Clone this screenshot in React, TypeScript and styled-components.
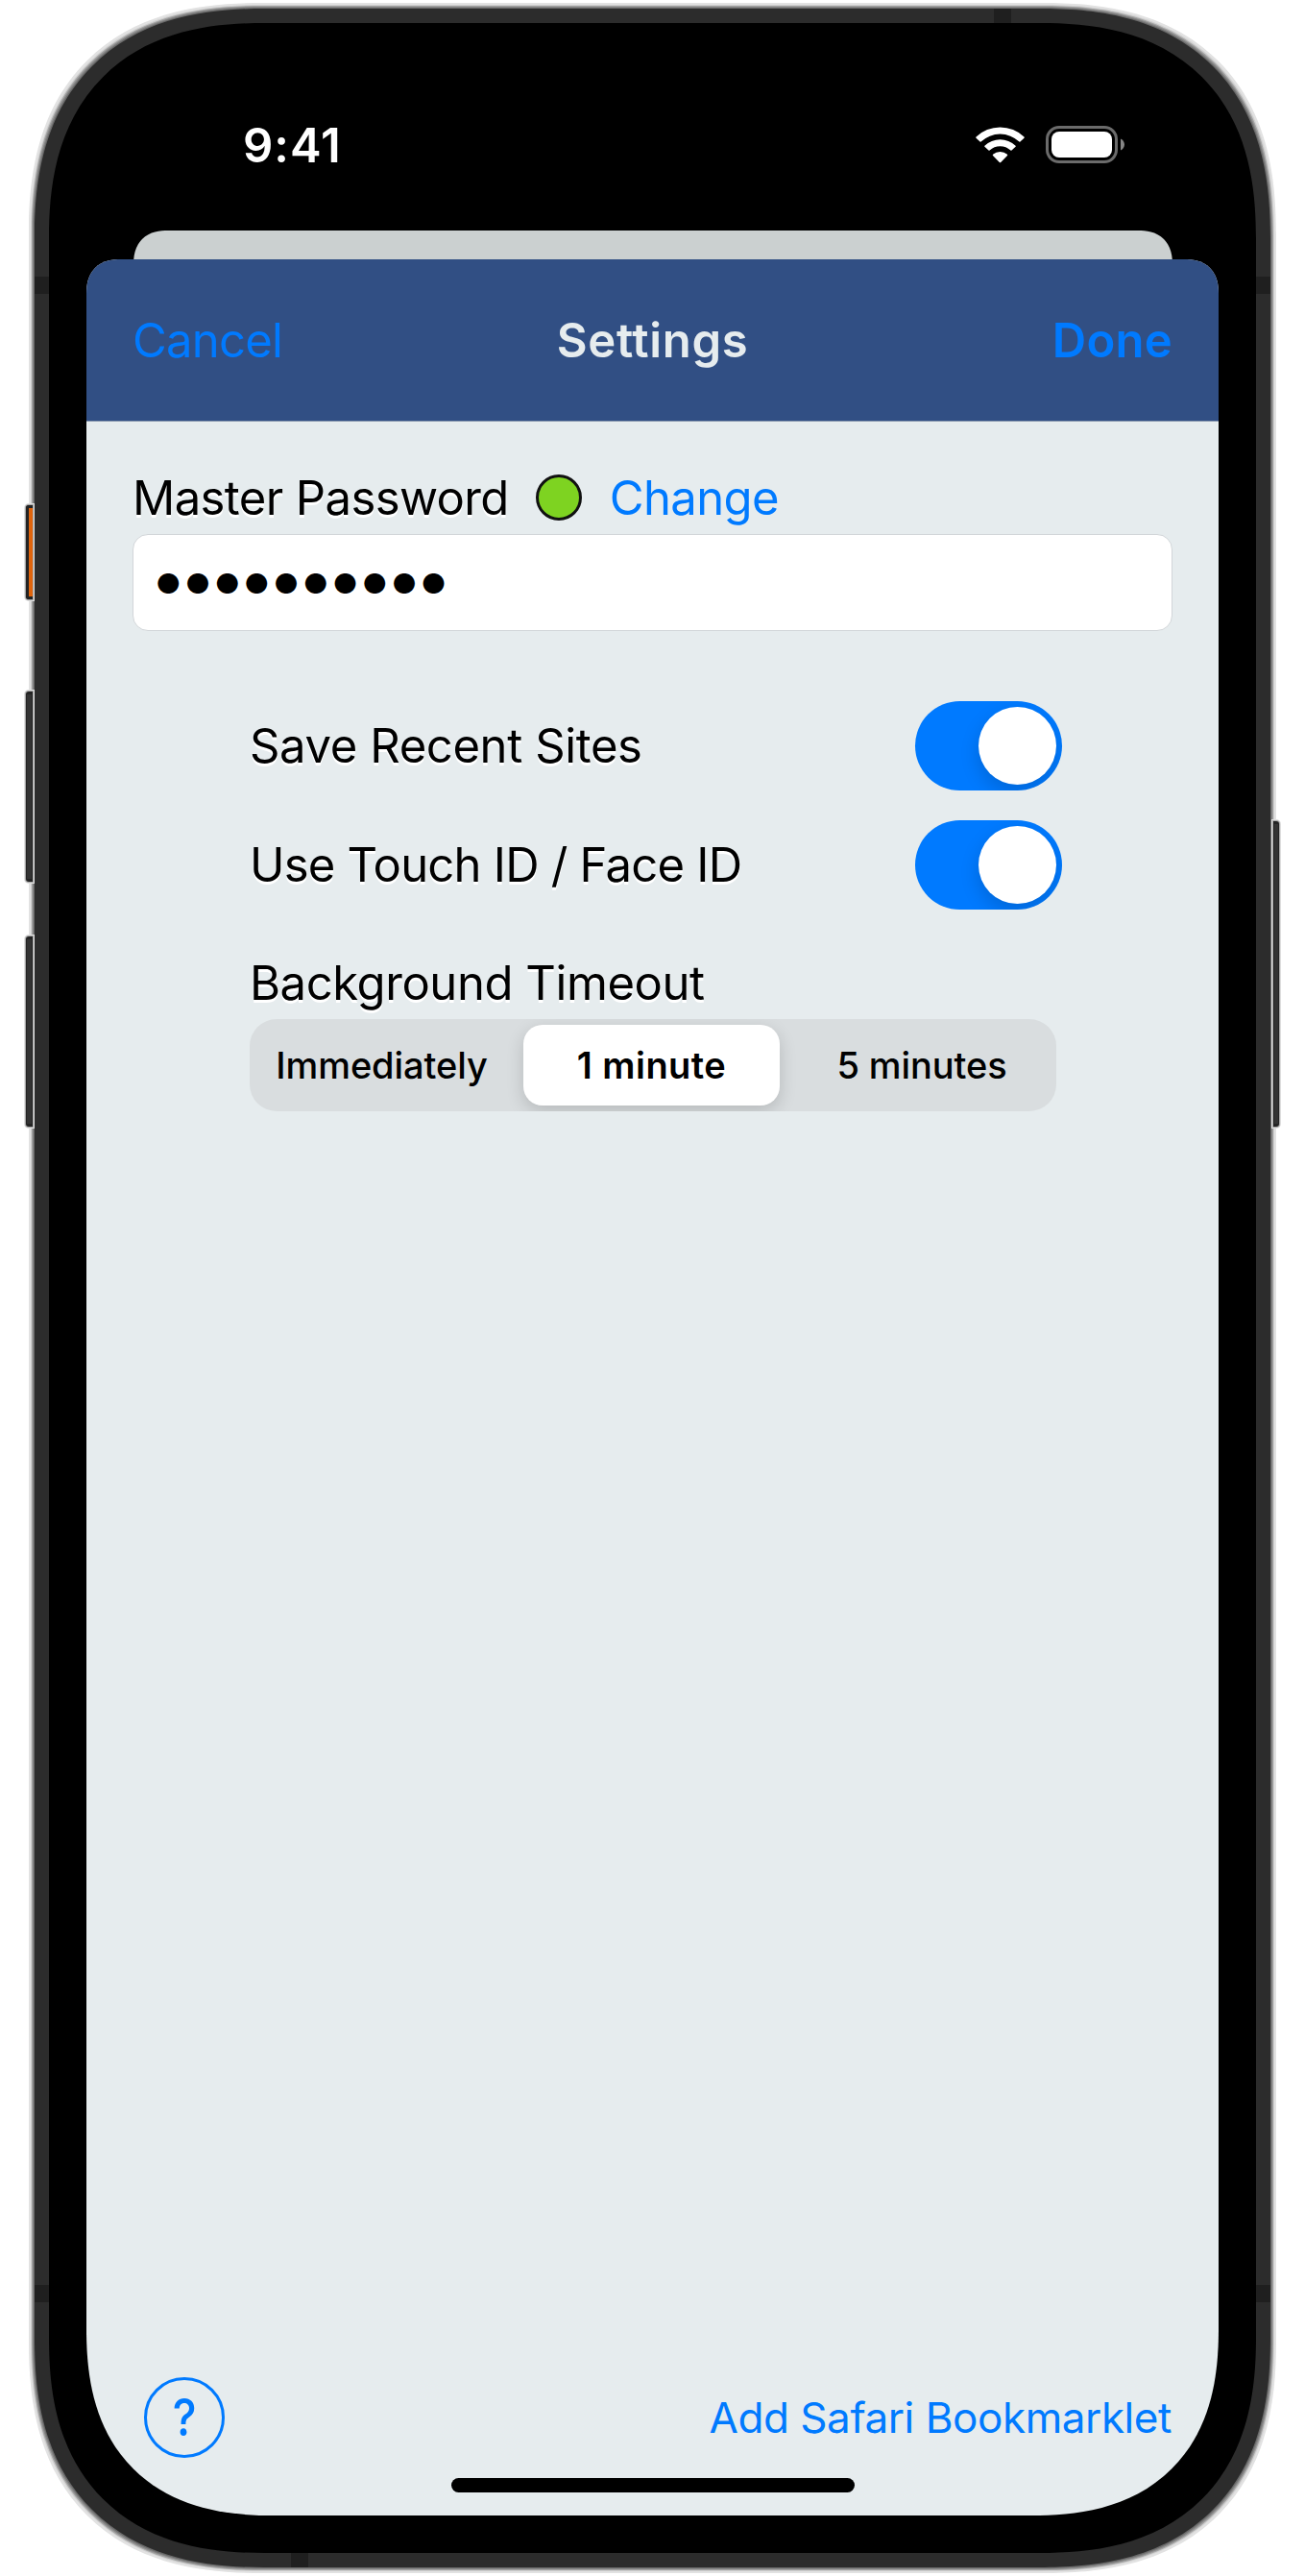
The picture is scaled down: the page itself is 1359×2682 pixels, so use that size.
import React, { useState } from "react";
import styled, { createGlobalStyle, css } from "styled-components";

const BLUE = "#007aff";
const PAPER = "#e6ecee";

const GlobalStyle = createGlobalStyle`
  *, *::before, *::after { box-sizing: border-box; }
  body {
    margin: 0;
    background: #fff;
    font-family: Inter, "Liberation Sans", sans-serif;
    -webkit-font-smoothing: antialiased;
  }
  button, input { font: inherit; }
`;

const smoothCorner = css`
  corner-shape: superellipse(1.27);
`;

const Page = styled.main`
  width: 1359px;
  height: 2682px;
  padding: 9px 36px 0;
  overflow: hidden;
`;

/* ---------- device ---------- */

const Frame = styled.div`
  position: relative;
  width: 1287px;
  height: 2664px;
  padding: 15px;
  background: #2c2c2c;
  border-radius: 240px;
  ${smoothCorner}
  box-shadow: 0 0 0 1px #6a6a6a, 0 0 0 2px #858585, 0 0 0 3px #a2a2a2, 0 0 0 4px #cfcfcf, 0 0 0 6px #e2e2e2;
`;

const Bezel = styled.div`
  position: relative;
  width: 1257px;
  height: 2634px;
  padding: 39px;
  background: #000;
  border-radius: 225px;
  ${smoothCorner}
`;

const Screen = styled.div`
  display: flex;
  flex-direction: column;
  height: 2556px;
  overflow: hidden;
  border-radius: 0 0 195px 195px;
  ${smoothCorner}
`;

const SideKey = styled.i<{ $side: "left" | "right"; $top: number; $height: number; $accent?: boolean }>`
  position: absolute;
  ${(p) => p.$side}: -9px;
  top: ${(p) => p.$top}px;
  width: ${(p) => (p.$side === "left" ? 7 : 6)}px;
  height: ${(p) => p.$height}px;
  background: ${(p) => (p.$accent ? "#e0640c" : "#333")};
  border: 2px solid #232323;
  border-width: ${(p) => (p.$accent ? "3px 0 3px 3px" : "3px 1px")};
  border-radius: ${(p) => (p.$side === "left" ? "3px 0 0 3px" : "0 3px 3px 0")};
  box-shadow: 0 0 0 1px #a8a8a8, 0 0 0 2px #dedede;
`;

const Band = styled.i<{ $edge: "left" | "right" | "top" | "bottom"; $at: number }>`
  position: absolute;
  background: #1f1f1f;
  ${(p) => p.$edge}: 0;
  ${(p) =>
    p.$edge === "left" || p.$edge === "right"
      ? css`top: ${p.$at}px; width: 15px; height: 18px;`
      : css`left: ${p.$at}px; width: 18px; height: 15px;`}
`;

/* ---------- status bar ---------- */

const StatusBar = styled.header`
  display: flex;
  justify-content: space-between;
  align-items: center;
  height: 177px;
  padding: 0 98px 0 163px;
  color: #fff;
`;

const Clock = styled.time`
  font-size: 49px;
  font-weight: 600;
  line-height: 60px;
  letter-spacing: 1px;
`;

const StatusIcons = styled.div`
  display: flex;
  align-items: center;
  gap: 22px;
  padding-bottom: 2px;
`;

/* ---------- sheet ---------- */

const BackSheet = styled.div`
  height: 60px;
  margin: 0 48px 0 49px;
  background: #cbd0d0;
  border-radius: 36px 36px 0 0;
  ${smoothCorner}
`;

const BackSheetWrap = styled.div`
  flex: none;
  height: 30px;
  overflow: hidden;
`;

const Sheet = styled.section`
  flex: 1;
  display: flex;
  flex-direction: column;
  background: ${PAPER};
  border-radius: 36px 36px 0 0;
  ${smoothCorner}
  overflow: hidden;
`;

const NavBar = styled.nav`
  display: grid;
  grid-template-columns: 1fr auto 1fr;
  align-items: center;
  height: 169px;
  padding: 2px 48px 0 48px;
  background: #314f84;
  border-bottom: 1px solid #8b99b0;
`;

const NavTitle = styled.h1`
  margin: 0;
  color: ${PAPER};
  font-size: 49px;
  font-weight: 600;
  line-height: 60px;
  letter-spacing: 0.66px;
`;

const TextButton = styled.button<{ $bold?: boolean; $size?: number; $tracking: number; $end?: boolean }>`
  justify-self: ${(p) => (p.$end ? "end" : "start")};
  padding: 0;
  border: 0;
  background: none;
  color: ${BLUE};
  font-size: ${(p) => p.$size ?? 49}px;
  font-weight: ${(p) => (p.$bold ? 600 : 400)};
  line-height: 60px;
  letter-spacing: ${(p) => p.$tracking}px;
  white-space: nowrap;
`;

const Body = styled.div`
  flex: 1;
  display: flex;
  flex-direction: column;
  padding: 41px 48px 0 48px;
`;

const Label = styled.span<{ $tracking: number }>`
  color: #000;
  font-size: 49px;
  line-height: 60px;
  letter-spacing: ${(p) => p.$tracking}px;
  white-space: nowrap;
  text-shadow: 0 3px 0 #fff;
`;

const PasswordRow = styled.div`
  display: flex;
  align-items: center;
  height: 76px;
  & > ${Label}, & > ${TextButton} { padding-top: 2px; }
`;

const Status = styled.i`
  width: 48px;
  height: 48px;
  margin: 0 29px 0 28px;
  border: 3px solid #111;
  border-radius: 50%;
  background: #7ed321;
`;

const PasswordField = styled.div`
  display: flex;
  align-items: center;
  height: 101px;
  padding: 2px 0 0 23px;
  background: #fff;
  border: 1px solid #d2d6d9;
  border-radius: 16px;
  font-size: 29px;
  line-height: 40px;
  letter-spacing: 4.2px;
`;

const Options = styled.div`
  width: 846px;
  margin: 57px 0 0 122px;
`;

const OptionRow = styled.label`
  display: flex;
  align-items: center;
  justify-content: space-between;
  height: 124px;
  & > ${Label} { padding-top: 2px; }
`;

const Switch = styled.button<{ $on: boolean }>`
  display: flex;
  justify-content: ${(p) => (p.$on ? "flex-end" : "flex-start")};
  align-items: center;
  width: 153px;
  height: 93px;
  padding: 6px;
  border: 0;
  border-radius: 47px;
  background: ${(p) => (p.$on ? BLUE : "#d5d9dc")};
  overflow: hidden;
`;

const Knob = styled.i`
  width: 81px;
  height: 81px;
  border-radius: 50%;
  background: #fff;
  box-shadow: 0 8px 20px rgba(0, 0, 0, 0.16);
`;

const TimeoutLabel = styled.div`
  height: 99px;
  padding-top: 32px;
`;

const Segments = styled.div`
  display: grid;
  grid-template-columns: 279px 267px 1fr;
  width: 840px;
  height: 96px;
  padding: 6px;
  border-radius: 28px;
  background: #d9dddf;
  overflow: hidden;
`;

const Segment = styled.button<{ $active: boolean }>`
  display: flex;
  align-items: center;
  justify-content: center;
  height: 84px;
  padding: 0;
  border: 0;
  border-radius: 20px;
  color: #000;
  background: ${(p) => (p.$active ? "#fff" : "transparent")};
  box-shadow: ${(p) => (p.$active ? "0 6px 18px rgba(0, 0, 0, 0.16)" : "none")};
  font-size: 38px;
  font-weight: ${(p) => (p.$active ? 600 : 500)};
  letter-spacing: ${(p) => (p.$active ? 0.45 : -0.1)}px;
  &:first-child { padding-right: 16px; }
  &:nth-child(3) { padding-left: 14px; }
`;

const Footer = styled.footer`
  display: flex;
  align-items: center;
  justify-content: space-between;
  height: 84px;
  margin: auto 49px 21px 60px;
`;

const Help = styled.button`
  display: flex;
  align-items: center;
  justify-content: center;
  width: 84px;
  height: 84px;
  padding: 0;
  border: 3px solid ${BLUE};
  border-radius: 50%;
  background: none;
  color: ${BLUE};
  font-size: 54px;
  font-weight: 500;
  line-height: 66px;
`;

const HelpMark = styled.span`
  transform: scaleX(0.87);
`;

const HomeIndicator = styled.div`
  width: 420px;
  height: 15px;
  margin: 0 auto 24px;
  border-radius: 8px;
  background: #000;
`;

function WifiIcon() {
  return (
    <svg width="51" height="38" viewBox="0 0 51 38" fill="#fff">
      <path d="M.5 10.600A36 36 0 0 1 50.500 10.600Q51 11.200 50.500 11.800L46.400 15.600Q45.900 16 45.400 15.500A29 29 0 0 0 5.600 15.500Q5.100 16 4.600 15.600L.5 11.800Q0 11.200 .5 10.600Z" />
      <path d="M9.400 19.700A23.500 23.500 0 0 1 41.600 19.700Q42.100 20.200 41.600 20.800L37.500 24.600Q36.900 25.100 36.400 24.600A16 16 0 0 0 14.600 24.600Q14.100 25.100 13.500 24.600L9.400 20.800Q8.900 20.200 9.400 19.700Z" />
      <path d="M18 28.800A11.500 11.500 0 0 1 33 28.800Q33.600 29.400 33 30L26.200 37Q25.500 37.700 24.800 37L18 30Q17.400 29.400 18 28.800Z" />
    </svg>
  );
}

function BatteryIcon() {
  return (
    <svg width="82" height="39" viewBox="0 0 82 39">
      <rect x="1.500" y="1.500" width="72" height="36" rx="12.500" fill="none" stroke="#6b6b6b" strokeWidth="3" />
      <rect x="6" y="6" width="63" height="27" rx="8" fill="#fff" />
      <path d="M78 13.500C80.500 14.500 82 17 82 19.500S80.500 24.500 78 25.500Z" fill="#858585" />
    </svg>
  );
}

const TIMEOUTS = ["Immediately", "1 minute", "5 minutes"];

export default function App() {
  const [saveSites, setSaveSites] = useState(true);
  const [useBiometrics, setUseBiometrics] = useState(true);
  const [timeout, setTimeoutChoice] = useState("1 minute");

  return (
    <>
      <GlobalStyle />
      <Page>
        <Frame>
          <SideKey $side="left" $top={517} $height={98} $accent />
          <SideKey $side="left" $top={711} $height={198} />
          <SideKey $side="left" $top={966} $height={198} />
          <SideKey $side="right" $top={846} $height={318} />
          <Band $edge="left" $at={279} />
          <Band $edge="right" $at={279} />
          <Band $edge="left" $at={2370} />
          <Band $edge="right" $at={2370} />
          <Band $edge="top" $at={999} />
          <Band $edge="bottom" $at={267} />
          <Bezel>
            <Screen>
              <StatusBar>
                <Clock>9:41</Clock>
                <StatusIcons>
                  <WifiIcon />
                  <BatteryIcon />
                </StatusIcons>
              </StatusBar>
              <BackSheetWrap>
                <BackSheet />
              </BackSheetWrap>
              <Sheet>
                <NavBar>
                  <TextButton $tracking={-0.76}>Cancel</TextButton>
                  <NavTitle>Settings</NavTitle>
                  <TextButton $tracking={0.27} $bold $end>Done</TextButton>
                </NavBar>
                <Body>
                  <PasswordRow>
                    <Label $tracking={-0.6}>Master Password</Label>
                    <Status />
                    <TextButton $tracking={-0.6}>Change</TextButton>
                  </PasswordRow>
                  <PasswordField>●●●●●●●●●●</PasswordField>
                  <Options>
                    <OptionRow>
                      <Label $tracking={-0.39}>Save Recent Sites</Label>
                      <Switch $on={saveSites} onClick={() => setSaveSites(!saveSites)}>
                        <Knob />
                      </Switch>
                    </OptionRow>
                    <OptionRow>
                      <Label $tracking={-0.78}>Use Touch ID / Face ID</Label>
                      <Switch $on={useBiometrics} onClick={() => setUseBiometrics(!useBiometrics)}>
                        <Knob />
                      </Switch>
                    </OptionRow>
                    <TimeoutLabel>
                      <Label $tracking={-0.44}>Background Timeout</Label>
                    </TimeoutLabel>
                    <Segments>
                      {TIMEOUTS.map((t) => (
                        <Segment key={t} $active={t === timeout} onClick={() => setTimeoutChoice(t)}>
                          {t}
                        </Segment>
                      ))}
                    </Segments>
                  </Options>
                </Body>
                <Footer>
                  <Help>
                    <HelpMark>?</HelpMark>
                  </Help>
                  <TextButton $size={44} $tracking={-0.44}>Add Safari Bookmarklet</TextButton>
                </Footer>
                <HomeIndicator />
              </Sheet>
            </Screen>
          </Bezel>
        </Frame>
      </Page>
    </>
  );
}
